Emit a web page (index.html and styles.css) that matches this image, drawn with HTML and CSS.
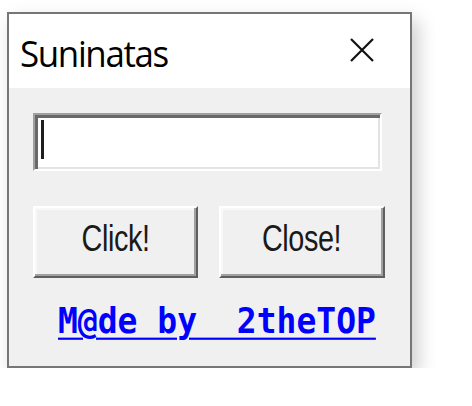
FILE: index.html
```html
<!DOCTYPE html>
<html>
<head>
<meta charset="utf-8">
<link rel="stylesheet" href="styles.css">
</head>
<body>
<div class="window">
  <div class="titlebar">
    <span class="title">Suninatas</span>
    <span class="close">
      <svg width="24" height="24" viewBox="0 0 24 24"><path d="M1 1 L23 23 M23 1 L1 23" stroke="#111" stroke-width="2.2" fill="none"/></svg>
    </span>
  </div>
  <div class="body">
    <div class="input"><span class="caret"></span></div>
    <div class="buttons">
      <div class="btn btn1"><span class="label">Click!</span></div>
      <div class="btn btn2"><span class="label">Close!</span></div>
    </div>
    <a class="link" href="#">M@de by  2theTOP</a>
  </div>
</div>
</body>
</html>
```
FILE: styles.css
```css
html, body {
  margin: 0;
  padding: 0;
  background: #ffffff;
}
body {
  padding: 12px 0 0 7px;
}
.window {
  width: 401px;
  height: 352px;
  border: 2px solid #767676;
  background: #f0f0f0;
  box-shadow: 6px 8px 18px rgba(0,0,0,0.2);
  display: flex;
  flex-direction: column;
}
.titlebar {
  height: 74px;
  background: #ffffff;
  display: flex;
  align-items: center;
  padding-left: 11px;
  box-sizing: border-box;
  position: relative;
}
.title {
  font-family: "Open Sans", "Noto Sans", sans-serif;
  font-size: 36px;
  letter-spacing: -1.4px;
  color: #000;
  margin-top: 4px;
  display: inline-block;
  transform: scaleX(0.97);
  transform-origin: left center;
}
.close {
  position: absolute;
  left: 341px;
  top: 24px;
  width: 24px;
  height: 24px;
}
.close svg { display: block; }
.body {
  flex: 1;
  padding: 25px 0 0 24px;
}
.input {
  width: 349px;
  height: 58px;
  box-sizing: border-box;
  background: #ffffff;
  border: 2px solid;
  border-color: #a0a0a0 #ffffff #ffffff #a0a0a0;
  box-shadow: inset 3px 3px 0 #696969, inset -2px -2px 0 #e3e3e3;
  padding: 5px 0 0 6px;
}
.caret {
  display: block;
  width: 3px;
  height: 39px;
  background: #1e1e1e;
}
.buttons {
  display: flex;
  gap: 21px;
  margin-top: 35px;
}
.btn {
  height: 72px;
  box-sizing: border-box;
  border: 2px solid;
  border-color: #ffffff #5f5f5f #5f5f5f #ffffff;
  box-shadow: inset -2px -2px 0 #a0a0a0, inset 2px 2px 0 #f8f8f8;
  background: #f0f0f0;
  display: flex;
  align-items: center;
  justify-content: center;
}
.btn1 { width: 165px; }
.btn2 { width: 166px; }
.label {
  font-family: "Liberation Sans", Arial, sans-serif;
  font-size: 36px;
  color: #1a1a1a;
  display: inline-block;
  transform: scaleX(0.8);
  margin-top: -7px;
  letter-spacing: -0.5px;
}
.link {
  display: inline-block;
  margin: 24px 0 0 25px;
  font-family: "DejaVu Sans Mono", "Liberation Mono", monospace;
  font-weight: bold;
  font-size: 33px;
  color: #0000ff;
  text-decoration: underline;
  text-decoration-thickness: 2px;
  text-underline-offset: 4px;
  white-space: pre;
  line-height: 36px;
  transform: scaleY(1.08);
  transform-origin: left top;
}
```
